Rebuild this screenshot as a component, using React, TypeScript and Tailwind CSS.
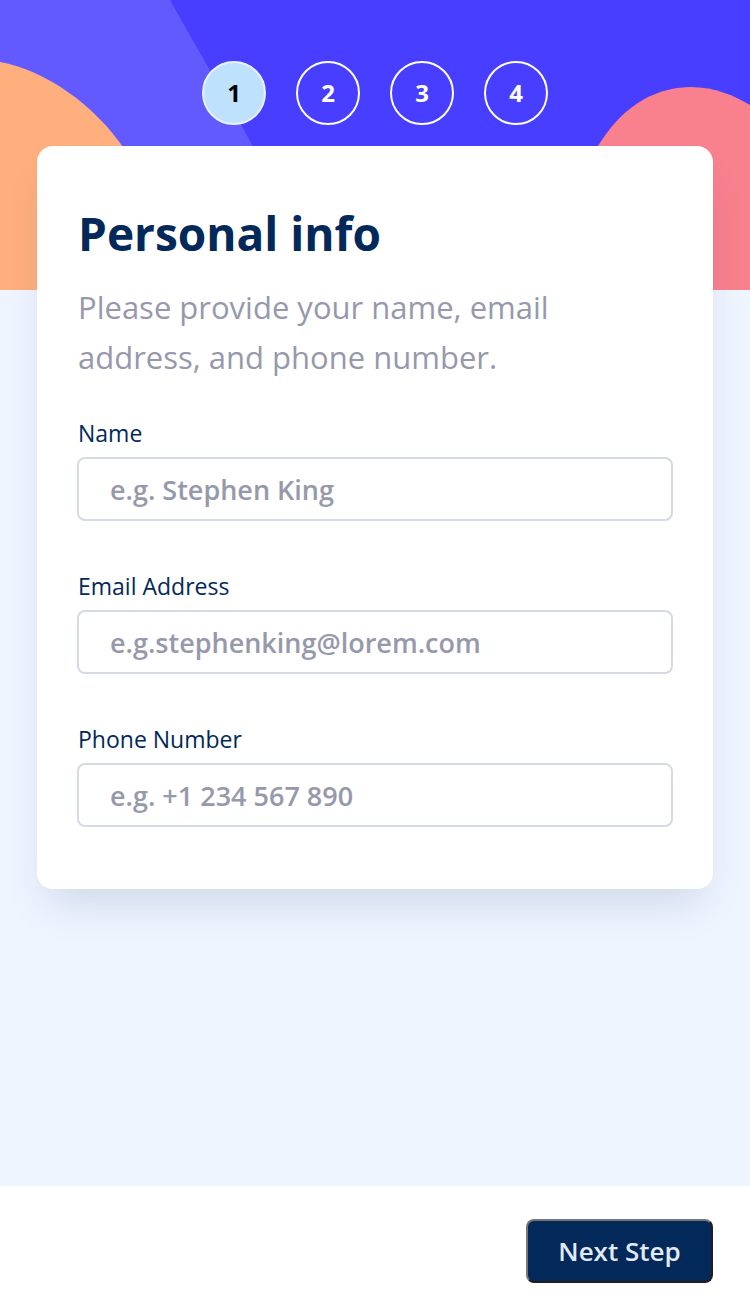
import { useState } from 'react';

const STEPS = [1, 2, 3, 4];

const FIELDS = [
  { id: 'name', label: 'Name', placeholder: 'e.g. Stephen King', type: 'text' },
  { id: 'email', label: 'Email Address', placeholder: 'e.g.stephenking@lorem.com', type: 'email' },
  { id: 'phone', label: 'Phone Number', placeholder: 'e.g. +1 234 567 890', type: 'tel' },
];

// Decorative header background (blobs)
const HeaderArt = () => (
  <svg className="absolute inset-x-0 top-0 h-[290px] w-full" viewBox="0 0 750 290" preserveAspectRatio="none">
    <rect width="750" height="290" fill="#483EFF" />
    <path d="M0 0 L170 0 C195 45 225 95 255 150 L290 290 L0 290 Z" fill="#6259FF" />
    <path d="M0 62 C45 70 95 105 125 150 C150 190 165 240 175 290 L0 290 Z" fill="#FFAF7E" />
    <path d="M598 146 C620 110 650 88 690 87 C715 87 735 96 750 105 L750 290 L580 290 Z" fill="#F9818E" />
  </svg>
);

export default function App() {
  const [values, setValues] = useState<Record<string, string>>({ name: '', email: '', phone: '' });
  const active = 1;

  return (
    <div className="flex min-h-screen flex-col bg-[#EFF5FF] font-['Open_Sans',sans-serif]">
      <main className="relative flex-1">
        <HeaderArt />

        {/* Steps */}
        <div className="relative flex justify-center gap-[30px] pt-[61px]">
          {STEPS.map((s) => (
            <div
              key={s}
              className={`flex h-[64px] w-[64px] items-center justify-center rounded-full border-2 text-[24px] font-bold ${
                s === active ? 'border-[#E8F3FE] bg-[#BEE2FD] text-black' : 'border-white text-white'
              }`}
            >
              {s}
            </div>
          ))}
        </div>

        {/* Card */}
        <div className="relative mx-[37px] mt-[21px] rounded-[16px] bg-white pb-[62px] pl-[41px] pr-[40px] pt-[57px] shadow-[0_25px_40px_-10px_rgba(2,41,90,0.13)]">
          <h1 className="text-[46px] font-bold leading-[60px] text-[#022959]">Personal info</h1>
          <p className="mt-[19px] text-[31px] leading-[50px] text-[#9699AB]">
            Please provide your name, email
            <br />
            address, and phone number.
          </p>

          <div className="mt-[35px] flex flex-col gap-[49px]">
            {FIELDS.map((f) => (
              <div key={f.id} className="flex flex-col">
                <label htmlFor={f.id} className="text-[23px] leading-[32px] text-[#022959]">
                  {f.label}
                </label>
                <input
                  id={f.id}
                  type={f.type}
                  value={values[f.id]}
                  onChange={(e) => setValues({ ...values, [f.id]: e.target.value })}
                  placeholder={f.placeholder}
                  className="-ml-px mt-[8px] h-[64px] w-[calc(100%+1px)] rounded-[8px] border-2 border-[#D6D9E6] px-[31px] text-[27px] font-semibold text-[#022959] outline-none placeholder:text-[#9699AB]"
                />
              </div>
            ))}
          </div>
        </div>
      </main>

      {/* Footer */}
      <footer className="flex h-[130px] items-center justify-end bg-white px-[37px]">
        <button className="h-[64px] w-[187px] rounded-[8px] border-2 border-b-[#1F1F1F] border-l-[#767676] border-r-[#1F1F1F] border-t-[#767676] bg-[#022959] text-[26px] font-semibold text-[#E3EAF7]">
          Next Step
        </button>
      </footer>
    </div>
  );
}
